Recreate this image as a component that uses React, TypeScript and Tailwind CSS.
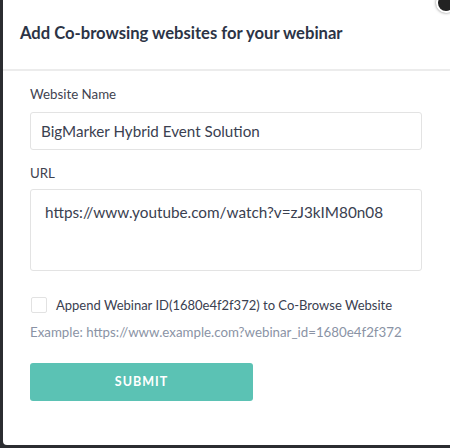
import React from "react";

export default function App() {
  return (
    <div className="w-[450px] h-[448px] bg-[#2b2d31] overflow-hidden relative" style={{ fontFamily: "Lato, 'Noto Sans', sans-serif" }}>
      <div className="ml-[3px] w-[460px] h-[445px] bg-white rounded-bl-[4px] flex flex-col">
        <div className="h-[71px] flex items-center pl-[17px] pb-[3px] border-b-2 border-[#ececec]">
          <h1 className="text-[16.6px] font-bold text-[#2c3446] whitespace-nowrap">Add Co-browsing websites for your webinar</h1>
        </div>
        <div className="pl-[27px] w-[419px] flex flex-col">
          <label className="mt-[13px] text-[13.3px] text-[#3f4350] leading-[20px]">Website Name</label>
          <div className="mt-[8px] h-[38px] border border-[#e3e3e3] rounded-[3px] flex items-center pl-[10px] text-[15.2px] text-[#3a4050] whitespace-nowrap">
            BigMarker Hybrid Event Solution
          </div>
          <label className="mt-[13px] text-[13.3px] text-[#3f4350] leading-[20px]">URL</label>
          <div className="mt-[6px] h-[82px] border border-[#e3e3e3] rounded-[3px] pl-[14px] pt-[11px] text-[15.3px] text-[#3a4050] whitespace-nowrap">
            https://www.youtube.com/watch?v=zJ3kIM80n08
          </div>
          <div className="mt-[24px] flex items-center">
            <div className="ml-[1px] w-[16px] h-[16px] border border-[#e2e2e2] rounded-[2px]" />
            <span className="ml-[9px] text-[13px] text-[#3a4050] leading-[20px] whitespace-nowrap">Append Webinar ID(1680e4f2f372) to Co-Browse Website</span>
          </div>
          <div className="mt-[7px] text-[13.3px] text-[#8a93a5] leading-[20px] whitespace-nowrap">Example: https://www.example.com?webinar_id=1680e4f2f372</div>
          <button className="mt-[21px] w-[223px] h-[38px] bg-[#5bc2b4] rounded-[3px] text-white text-[12.5px] font-bold tracking-[1px]">
            SUBMIT
          </button>
        </div>
      </div>
      <div className="absolute -top-[7px] -right-[6px] w-[20px] h-[20px] rounded-full bg-[#222] border-2 border-white shadow-[0_0_3px_rgba(0,0,0,0.5)]" />
    </div>
  );
}
